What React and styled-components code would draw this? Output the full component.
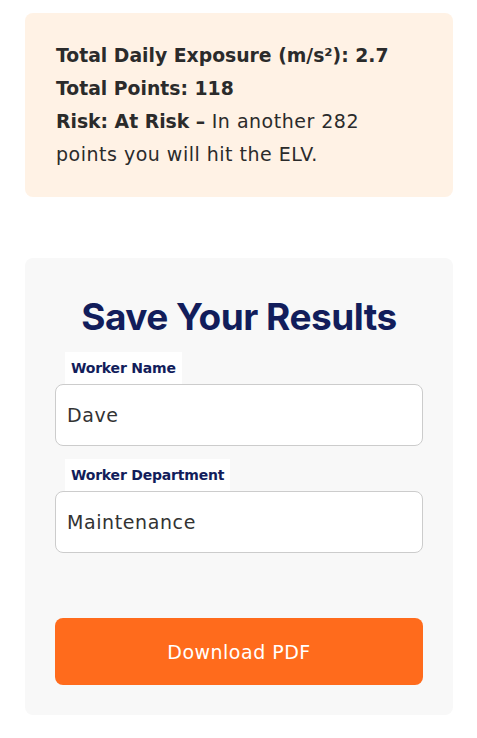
import React from "react";
import styled, { createGlobalStyle } from "styled-components";

const GlobalStyle = createGlobalStyle`
  body {
    margin: 0;
    background: #ffffff;
    font-family: "DejaVu Sans", "Open Sans", sans-serif;
  }
`;

const App = () => {
  return (
    <Page>
      <GlobalStyle />
      <ResultBox>
        <Line>
          <strong>Total Daily Exposure (m/s²): 2.7</strong>
        </Line>
        <Line>
          <strong>Total Points: 118</strong>
        </Line>
        <Line>
          <strong>Risk: At Risk –</strong> In another 282 points you will hit
          the ELV.
        </Line>
      </ResultBox>

      <SaveCard>
        <Heading>Save Your Results</Heading>
        <Field>
          <Label>Worker Name</Label>
          <Input defaultValue="Dave" />
        </Field>
        <Field>
          <Label>Worker Department</Label>
          <Input defaultValue="Maintenance" />
        </Field>
        <Button>Download PDF</Button>
      </SaveCard>
    </Page>
  );
};
export default App;

const Page = styled.div`
  display: flex;
  flex-direction: column;
  gap: 61px;
  width: 428px;
  padding: 13px 0 0 25px;
`;

const ResultBox = styled.div`
  background: #fff2e5;
  border-radius: 8px;
  padding: 26px 60px 26px 31px;
  color: #2b2b2b;
  font-size: 19px;
  letter-spacing: 0.5px;
  line-height: 33px;
`;

const Line = styled.div`
  strong {
    font-size: 18.8px;
    font-weight: 700;
    letter-spacing: 0;
  }
`;

const SaveCard = styled.div`
  display: flex;
  flex-direction: column;
  background: #f8f8f8;
  border-radius: 8px;
  padding: 36px 30px 30px;
`;

const Heading = styled.h2`
  margin: 0 0 12px;
  text-align: center;
  color: #121d5b;
  font-family: "Inter", "Open Sans", sans-serif;
  font-size: 37px;
  font-weight: 700;
  line-height: 46px;
  letter-spacing: -0.5px;
`;

const Field = styled.div`
  display: flex;
  flex-direction: column;
  align-items: flex-start;
  margin-bottom: 13px;
`;

const Label = styled.label`
  margin-left: 10px;
  padding: 0 6px;
  height: 32px;
  line-height: 32px;
  background: #ffffff;
  color: #121d5b;
  font-size: 14px;
  font-weight: 700;
  letter-spacing: -0.2px;
`;

const Input = styled.input`
  box-sizing: border-box;
  width: 100%;
  height: 62px;
  padding: 0 11px;
  border: 1px solid #cccccc;
  border-radius: 8px;
  background: #ffffff;
  color: #333333;
  font-family: inherit;
  font-size: 19px;
  letter-spacing: 0.6px;
  outline: none;
`;

const Button = styled.button`
  margin-top: 52px;
  height: 67px;
  border: none;
  border-radius: 8px;
  background: #ff6b1c;
  color: #ffffff;
  font-family: inherit;
  font-size: 19px;
  letter-spacing: 0.5px;
  cursor: pointer;
`;
